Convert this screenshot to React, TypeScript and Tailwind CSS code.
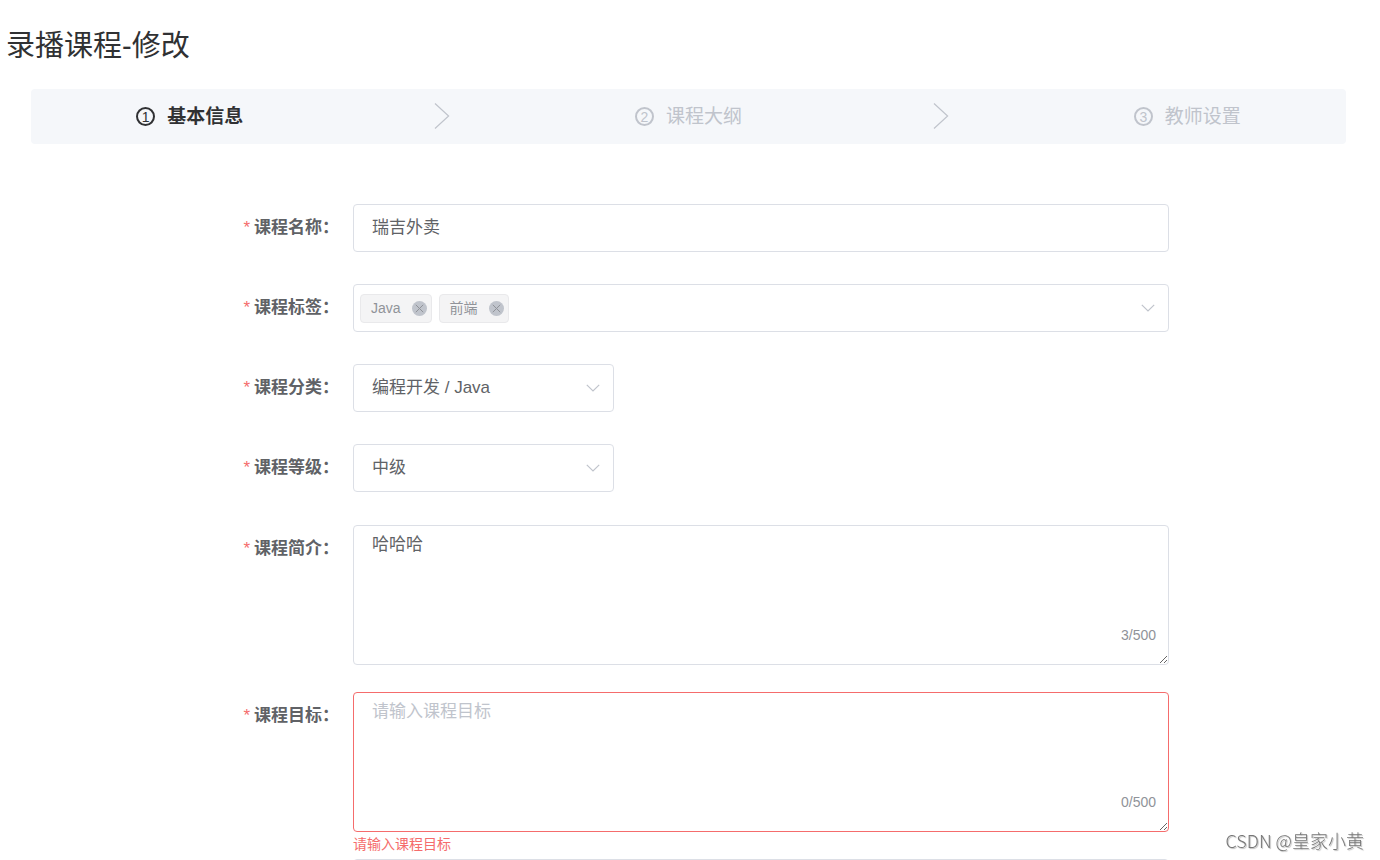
import { useState } from "react";
import type { ReactNode } from "react";

const fontClasses = "font-['Liberation_Sans','Noto_Sans_CJK_SC',sans-serif]";

const fieldClasses =
  "block w-full rounded border bg-white px-[18px] text-[17px] text-[#606266] outline-none placeholder:text-[#c0c4cc]";

const steps = ["基本信息", "课程大纲", "教师设置"];

function StepArrow() {
  return (
    <svg width="16" height="28" viewBox="0 0 16 28" fill="none" stroke="#c0c4cc" strokeWidth="1.2" aria-hidden="true">
      <path d="M1 .5 14.6 13 1 25.5" />
    </svg>
  );
}

function Chevron() {
  return (
    <svg
      className="pointer-events-none absolute top-1/2 right-[14px] -translate-y-1/2"
      width="14"
      height="8"
      viewBox="0 0 14 8"
      fill="none"
      stroke="#c0c4cc"
      strokeWidth="1.2"
      aria-hidden="true"
    >
      <path d="M.8.8 7 7 13.2.8" />
    </svg>
  );
}

function StepBar({ active }: { active: number }) {
  return (
    <div className="mr-[34px] ml-[31px]">
      <ol className="flex h-[55px] items-center rounded bg-[#f5f7fa] px-[8%]">
        {steps.map((title, i) => {
          const current = i === active;
          const last = i === steps.length - 1;
          return (
            <li
              key={title}
              aria-current={current ? "step" : undefined}
              className={`flex items-center ${last ? "" : "flex-1"} ${
                current ? "text-[#303133]" : "text-[#c0c4cc]"
              }`}
            >
              <span className="flex size-[19px] items-center justify-center rounded-full border-2 border-current text-sm leading-none">
                {i + 1}
              </span>
              <span className={`pl-3 text-[19px] leading-7 ${current ? "font-bold" : ""}`}>{title}</span>
              {!last && (
                <span className="flex flex-1 justify-center pl-1.5">
                  <StepArrow />
                </span>
              )}
            </li>
          );
        })}
      </ol>
    </div>
  );
}

function FormRow({ id, label, children }: { id: string; label: string; children: ReactNode }) {
  return (
    <div className="flex">
      <label
        htmlFor={id}
        className="w-[145px] shrink-0 pr-[14px] text-right text-[17px] leading-[48px] font-bold whitespace-nowrap text-[#606266]"
      >
        <span className="mr-1 font-normal text-[#f56c6c]">*</span>
        {label}：
      </label>
      <div className="min-w-0 flex-1">{children}</div>
    </div>
  );
}

function SelectField({ id, options }: { id: string; options: string[] }) {
  return (
    <div className="relative w-[261px]">
      <select id={id} className={`${fieldClasses} h-12 appearance-none border-[#dcdfe6]`}>
        {options.map((o) => (
          <option key={o}>{o}</option>
        ))}
      </select>
      <Chevron />
    </div>
  );
}

interface CountedTextareaProps {
  id: string;
  value: string;
  onChange: (value: string) => void;
  placeholder?: string;
  error?: string;
}

function CountedTextarea({ id, value, onChange, placeholder, error }: CountedTextareaProps) {
  return (
    <>
      <div className="relative">
        <textarea
          id={id}
          value={value}
          onChange={(e) => onChange(e.target.value)}
          maxLength={500}
          placeholder={placeholder}
          aria-invalid={!!error}
          className={`${fieldClasses} h-[140px] resize-y py-1.5 leading-[25px] ${
            error ? "border-[#f56c6c]" : "border-[#dcdfe6]"
          }`}
        />
        <span className="pointer-events-none absolute right-[13px] bottom-5 text-sm text-[#909399]">
          {value.length}/500
        </span>
      </div>
      {error && <p className="pt-1 pb-px text-sm leading-4 text-[#f56c6c]">{error}</p>}
    </>
  );
}

export default function App() {
  const [name, setName] = useState("瑞吉外卖");
  const [tags, setTags] = useState(["Java", "前端"]);
  const [intro, setIntro] = useState("哈哈哈");
  const [goal, setGoal] = useState("");

  return (
    <main lang="zh-CN" className={`h-screen overflow-hidden bg-white ${fontClasses}`}>
      <h1 className="pt-[26px] pb-[23px] pl-1.5 text-[29px] leading-10 font-normal text-[#303133]">
        录播课程-修改
      </h1>

      <StepBar active={0} />

      <form className="mt-[60px] mr-[211px] ml-[208px]">
        <div className="space-y-8">
          <FormRow id="name" label="课程名称">
            <input
              id="name"
              type="text"
              value={name}
              onChange={(e) => setName(e.target.value)}
              className={`${fieldClasses} h-12 border-[#dcdfe6] pb-1.5`}
            />
          </FormRow>

          <FormRow id="tags" label="课程标签">
            <div className="relative">
              <div className="flex h-12 items-center gap-[7px] rounded border border-[#dcdfe6] px-1.5">
                {tags.map((tag) => (
                  <span
                    key={tag}
                    className="flex h-[29px] items-center gap-[11px] rounded border border-[#e9e9eb] bg-[#f4f4f5] pr-1 pl-2.5 text-sm text-[#909399]"
                  >
                    {tag}
                    <button
                      type="button"
                      aria-label={tag}
                      onClick={() => setTags((prev) => prev.filter((t) => t !== tag))}
                      className="flex size-[15px] cursor-pointer items-center justify-center rounded-full bg-[#c0c4cc]"
                    >
                      <svg width="9" height="9" viewBox="0 0 9 9" stroke="#909399" aria-hidden="true">
                        <path d="M.8.8 8.2 8.2M8.2.8.8 8.2" />
                      </svg>
                    </button>
                  </span>
                ))}
                <input id="tags" type="text" className="min-w-0 flex-1 bg-transparent outline-none" />
              </div>
              <Chevron />
            </div>
          </FormRow>

          <FormRow id="category" label="课程分类">
            <SelectField id="category" options={["编程开发 / Java"]} />
          </FormRow>

          <FormRow id="level" label="课程等级">
            <SelectField id="level" options={["中级"]} />
          </FormRow>
        </div>

        <div className="mt-[33px] space-y-[27px]">
          <FormRow id="intro" label="课程简介">
            <CountedTextarea id="intro" value={intro} onChange={setIntro} />
          </FormRow>

          <FormRow id="goal" label="课程目标">
            <CountedTextarea
              id="goal"
              value={goal}
              onChange={setGoal}
              placeholder="请输入课程目标"
              error={goal ? undefined : "请输入课程目标"}
            />
          </FormRow>
        </div>

        {/* next field, runs past the fold */}
        <div className="mt-1.5 ml-[145px] h-12 rounded border border-[#dcdfe6]" />
      </form>

      <p className="fixed right-4 bottom-1.5 font-['Noto_Sans_CJK_SC',sans-serif] text-lg font-light text-[#777] [text-shadow:1px_1px_1px_#bbb]">
        CSDN @皇家小黄
      </p>
    </main>
  );
}
